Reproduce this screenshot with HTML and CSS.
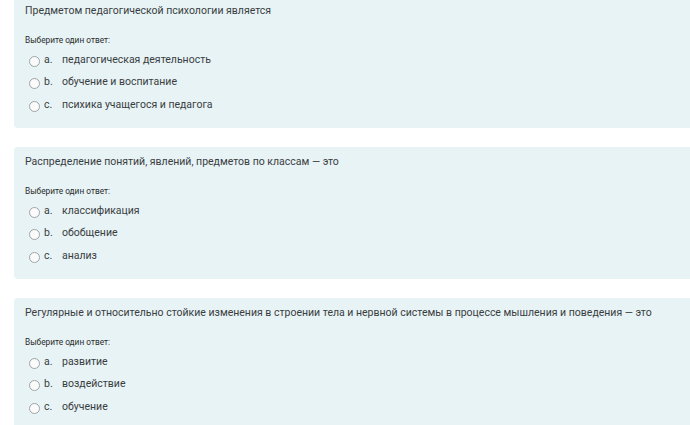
FILE: index.html
```html
<!DOCTYPE html>
<html lang="ru">
<head>
<meta charset="utf-8">
<link rel="stylesheet" href="styles.css">
</head>
<body>
<div class="list">
  <div class="card">
    <div class="qtext">Предметом педагогической психологии является</div>
    <div class="prompt">Выберите один ответ:</div>
    <div class="answers">
      <label class="opt"><span class="radio"></span><span class="letter">a.</span><span class="label">педагогическая деятельность</span></label>
      <label class="opt"><span class="radio"></span><span class="letter">b.</span><span class="label">обучение и воспитание</span></label>
      <label class="opt"><span class="radio"></span><span class="letter">c.</span><span class="label">психика учащегося и педагога</span></label>
    </div>
  </div>
  <div class="card">
    <div class="qtext">Распределение понятий, явлений, предметов по классам — это</div>
    <div class="prompt">Выберите один ответ:</div>
    <div class="answers">
      <label class="opt"><span class="radio"></span><span class="letter">a.</span><span class="label">классификация</span></label>
      <label class="opt"><span class="radio"></span><span class="letter">b.</span><span class="label">обобщение</span></label>
      <label class="opt"><span class="radio"></span><span class="letter">c.</span><span class="label">анализ</span></label>
    </div>
  </div>
  <div class="card">
    <div class="qtext">Регулярные и относительно стойкие изменения в строении тела и нервной системы в процессе мышления и поведения — это</div>
    <div class="prompt">Выберите один ответ:</div>
    <div class="answers">
      <label class="opt"><span class="radio"></span><span class="letter">a.</span><span class="label">развитие</span></label>
      <label class="opt"><span class="radio"></span><span class="letter">b.</span><span class="label">воздействие</span></label>
      <label class="opt"><span class="radio"></span><span class="letter">c.</span><span class="label">обучение</span></label>
    </div>
  </div>
</div>
</body>
</html>
```
FILE: styles.css
```css
html, body {
  margin: 0;
  padding: 0;
  background: #ffffff;
  overflow: hidden;
}
body {
  font-family: Roboto, "Noto Sans", sans-serif;
  color: #3a3d3f;
}
.list {
  margin-top: -4px;
  margin-left: 14px;
  margin-right: -8px;
  display: flex;
  flex-direction: column;
  gap: 19px;
}
.card {
  background: #e7f3f5;
  border-radius: 4px;
  height: 132px;
  box-sizing: border-box;
  padding: 8px 11px 0 11px;
}
.qtext {
  font-size: 10.5px;
  line-height: 13px;
}
.prompt {
  margin-top: 19px;
  font-size: 8.3px;
  line-height: 9px;
  color: #2b2b2b;
}
.answers {
  margin-top: 3px;
  display: flex;
  flex-direction: column;
}
.opt {
  display: flex;
  align-items: center;
  height: 22.5px;
  font-size: 10.5px;
}
.radio {
  width: 9px;
  height: 9px;
  border: 1px solid #a0a4a6;
  border-radius: 50%;
  background: #fbfbfb;
  margin-left: 4px;
  margin-top: 4px;
  margin-right: 4px;
  flex: none;
}
.letter {
  width: 18px;
  flex: none;
}
```
